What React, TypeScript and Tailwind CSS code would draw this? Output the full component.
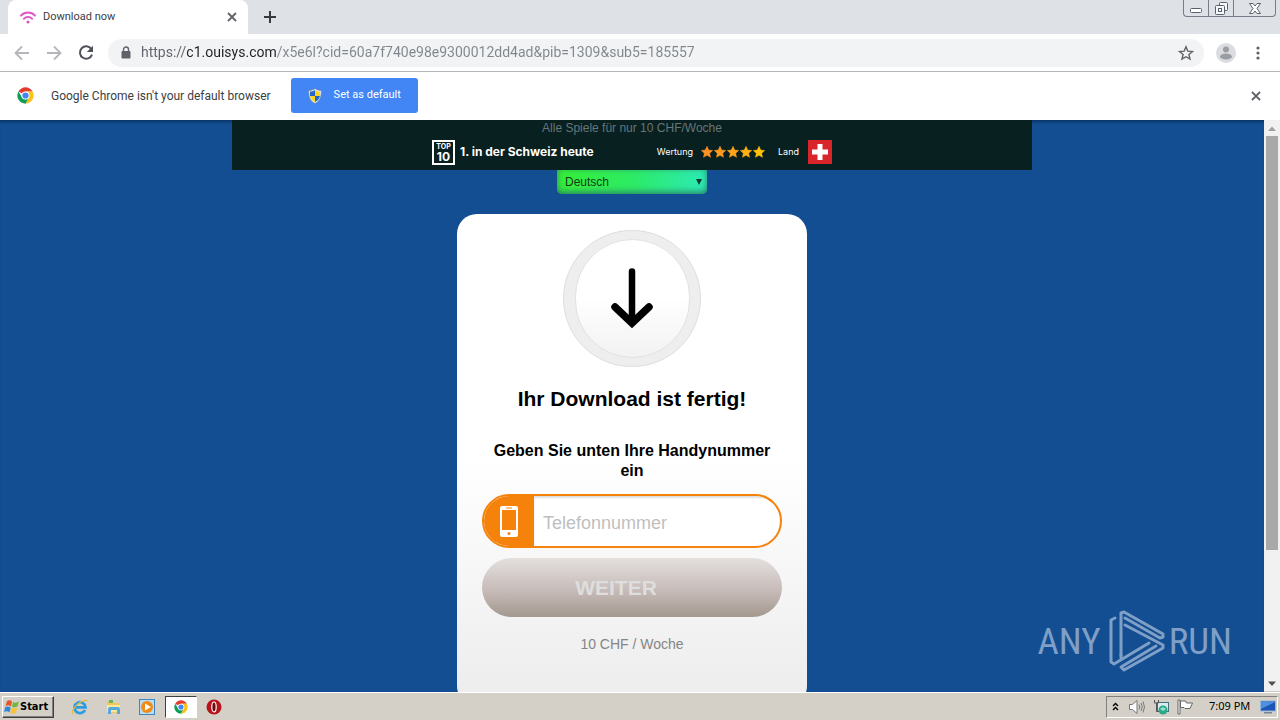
import React from 'react';

const ChromeLogo: React.FC<{ className: string }> = ({ className }) => (
  <svg viewBox="0 0 48 48" className={className} aria-hidden="true">
    <path d="M24 24 4.1 12.5A23 23 0 0 1 43.9 12.5L24 13Z" fill="#e33b2e" />
    <path d="M24 13H43.9A23 23 0 0 1 24 47L33.5 29.5Z" fill="#fbc116" />
    <path d="M4.1 12.5 14.5 29.5 24 35 33.5 29.5 24 47A23 23 0 0 1 4.1 12.5Z" fill="#109d58" />
    <circle cx="24" cy="24" r="11.5" fill="#fff" />
    <circle cx="24" cy="24" r="8.8" fill="#4285f4" />
  </svg>
);

const Shield = () => (
  <svg viewBox="0 0 16 16" className="h-4 w-4" aria-hidden="true">
    <path d="M8 .5C6 2 4 2.4 1.6 2.4 1.6 8 2.5 13 8 15.5 13.5 13 14.4 8 14.4 2.4 12 2.4 10 2 8 .5Z" fill="#e8eef5" stroke="#667f9d" strokeWidth=".7" />
    <path d="M8 2C6.5 3 5 3.5 3 3.6V8H8Z" fill="#2467c4" />
    <path d="M8 2C9.5 3 11 3.5 13 3.6V8H8Z" fill="#fbd51f" />
    <path d="M3 8H8V14C5 12.5 3.5 10.5 3 8Z" fill="#fbd51f" />
    <path d="M13 8H8V14C11 12.5 12.5 10.5 13 8Z" fill="#2467c4" />
  </svg>
);

const CrossIcon = () => (
  <svg viewBox="0 0 10 10" className="h-[10px] w-[10px]" aria-hidden="true">
    <path d="m1 1 8 8M9 1 1 9" stroke="#5f6368" strokeWidth="1.8" />
  </svg>
);

const TabStrip = () => (
  <header className="flex h-[34px] shrink-0 justify-between bg-[#dee1e6] pl-2">
    <div className="flex">
      <div className="flex w-60 items-center rounded-t-lg bg-white pl-3 pr-[11px]">
        <svg viewBox="0 0 16 13" className="mr-[7px] h-[13px] w-4" fill="none" stroke="#e056c8" strokeWidth="1.8" strokeLinecap="round" aria-hidden="true">
          <path d="M1 4.5C5 .5 11 .5 15 4.5M3.8 7.8C6 5.2 10 5.2 12.2 7.8" />
          <circle cx="8" cy="11" r="1.6" fill="#e056c8" stroke="none" />
        </svg>
        <span className="flex-1 text-[11px] text-[#3c4043]">Download now</span>
        <button aria-label="Close tab"><CrossIcon /></button>
      </div>
      <button aria-label="New tab" className="ml-4">
        <svg viewBox="0 0 12 12" className="h-3 w-3" aria-hidden="true">
          <path d="M6 0V12M0 6H12" stroke="#333a42" strokeWidth="2" />
        </svg>
      </button>
    </div>
    <div className="mr-1 flex h-[17px] w-[93px] rounded-b border border-t-0 border-[#777d88] text-[#596171]">
      <button aria-label="Minimize" className="flex w-[25px] items-end justify-center border-r border-[#777d88] pb-[3px]">
        <svg viewBox="0 0 12 5" className="h-[5px] w-3" aria-hidden="true"><rect x=".5" y=".5" width="11" height="4" rx="1" fill="#fff" stroke="currentColor" /></svg>
      </button>
      <button aria-label="Restore" className="flex w-[25px] items-center justify-center border-r border-[#777d88]">
        <svg viewBox="0 0 13 13" className="h-[13px] w-[13px]" fill="#f6f7f9" stroke="currentColor" aria-hidden="true">
          <rect x="4.5" y=".5" width="8" height="8" rx="1" />
          <rect x=".5" y="3.5" width="9" height="9" rx="1" />
          <rect x="3.5" y="6.5" width="3" height="3" />
        </svg>
      </button>
      <button aria-label="Close window" className="flex flex-1 items-center justify-center">
        <svg viewBox="0 0 12 11" className="h-[11px] w-3" aria-hidden="true">
          <path d="M.5.5H4L6 3 8 .5H11.5L8 5.5 11.5 10.5H8L6 8 4 10.5H.5L4 5.5Z" fill="#fff" stroke="currentColor" />
        </svg>
      </button>
    </div>
  </header>
);

const Toolbar = () => (
  <nav className="flex h-[38px] shrink-0 items-center border-b border-[#b3b5b8] bg-white pl-[14px] pr-5" aria-label="Navigation">
    <button aria-label="Back" className="mr-4">
      <svg viewBox="0 0 16 16" className="h-4 w-4" fill="none" stroke="#b4b6b9" strokeWidth="1.8" aria-hidden="true"><path d="M15 8H2M8 1.5 1.5 8 8 14.5" /></svg>
    </button>
    <button aria-label="Forward" className="mr-4">
      <svg viewBox="0 0 16 16" className="h-4 w-4" fill="none" stroke="#b4b6b9" strokeWidth="1.8" aria-hidden="true"><path d="M1 8H14M8 1.5 14.5 8 8 14.5" /></svg>
    </button>
    <button aria-label="Reload" className="mr-[14px]">
      <svg viewBox="0 0 16 16" className="h-4 w-4" aria-hidden="true">
        <path d="M13.3 4A6.2 6.2 0 1 0 14 9.6" fill="none" stroke="#4d5156" strokeWidth="2" />
        <path d="M15 .8V7H8.8Z" fill="#4d5156" />
      </svg>
    </button>
    <div className="flex h-7 flex-1 items-center rounded-full bg-[#f1f3f4] pl-[13px] pr-[10px]">
      <svg viewBox="0 0 10 13" className="mr-[10px] h-[13px] w-[10px]" aria-hidden="true">
        <rect x=".5" y="5" width="9" height="7.5" rx="1" fill="#5f6368" />
        <path d="M2.5 5.5V3.5a2.5 2.5 0 0 1 5 0V5.5" fill="none" stroke="#5f6368" strokeWidth="1.4" />
      </svg>
      <input
        aria-label="Address"
        defaultValue="https://c1.ouisys.com/x5e6l?cid=60a7f740e98e9300012dd4ad&pib=1309&sub5=185557"
        className="min-w-0 flex-1 bg-[linear-gradient(90deg,#5f6368_46px,#202124_46px,#202124_136px,#80868b_136px)] bg-clip-text pb-[2px] text-sm text-transparent outline-none"
      />
      <button aria-label="Bookmark">
        <svg viewBox="0 0 16 16" className="h-4 w-4" aria-hidden="true">
          <path d="m8 1.8 1.8 4.3 4.7.4-3.6 3 1.1 4.6L8 11.7l-4 2.4 1.1-4.6-3.6-3 4.7-.4Z" fill="none" stroke="#5f6368" strokeWidth="1.4" />
        </svg>
      </button>
    </div>
    <button aria-label="Profile" className="ml-3">
      <svg viewBox="0 0 20 20" className="h-5 w-5" aria-hidden="true">
        <circle cx="10" cy="10" r="10" fill="#dadce0" />
        <circle cx="10" cy="6.5" r="3" fill="#9a9da1" />
        <ellipse cx="10" cy="13.5" rx="6" ry="3" fill="#9a9da1" />
      </svg>
    </button>
    <button aria-label="Menu" className="ml-5">
      <svg viewBox="0 0 4 14" className="h-[14px] w-1" fill="#5f6368" aria-hidden="true">
        <circle cx="2" cy="2" r="1.6" /><circle cx="2" cy="7" r="1.6" /><circle cx="2" cy="12" r="1.6" />
      </svg>
    </button>
  </nav>
);

const InfoBar = () => (
  <div className="flex h-12 shrink-0 items-center bg-white pb-px pl-[17px] pr-[19px]">
    <ChromeLogo className="mr-[17px] h-[17px] w-[17px]" />
    <span className="text-xs text-[#3c4043]">Google Chrome isn't your default browser</span>
    <button className="ml-5 flex h-[35px] w-[127px] items-center rounded-[3px] bg-[#4285f4] pl-4 text-[11px] text-white">
      <Shield />
      <span className="ml-[11px]">Set as default</span>
    </button>
    <button aria-label="Dismiss" className="ml-auto"><CrossIcon /></button>
  </div>
);

const starColors = ['#ff9124', '#ff9a1f', '#ffa31a', '#ffb013', '#ffc107'];

const Banner = () => (
  <div className="h-[50px] w-full max-w-[800px] shrink-0 bg-[#08201f]">
    <p className="h-[18px] text-center text-xs leading-4 text-[#66767a]">Alle Spiele für nur 10 CHF/Woche</p>
    <div className="mx-auto flex h-7 w-[400px] items-center font-['Inter',sans-serif] text-white">
      <div className="flex h-[25px] w-[23px] flex-col items-center justify-center border-2 border-white pt-px font-bold">
        <span className="text-[7px] leading-[8px]">TOP</span>
        <span className="text-[12px] leading-[12px]">10</span>
      </div>
      <strong className="ml-[5px] flex-1 text-[12px] font-bold">1. in der Schweiz heute</strong>
      <span className="text-[9px]">Wertung</span>
      <div className="ml-2 flex gap-px" role="img" aria-label="5 / 5">
        {starColors.map((color) => (
          <svg key={color} viewBox="0 0 12 12" className="h-3 w-3" aria-hidden="true">
            <path d="m6 .3 1.7 3.7 4 .5-3 2.7.8 4.1L6 9.3l-3.5 2 .8-4.1-3-2.7 4-.5Z" fill={color} stroke={color} strokeWidth=".5" strokeLinejoin="round" />
          </svg>
        ))}
      </div>
      <span className="ml-[13px] text-[9px]">Land</span>
      <svg viewBox="0 0 24 24" className="ml-[9px] h-6 w-6" aria-hidden="true">
        <rect width="24" height="24" fill="#d9262b" />
        <path d="M9.5 4h5v5.5H20v5h-5.5V20h-5v-5.5H4v-5h5.5Z" fill="#fff" />
      </svg>
    </div>
  </div>
);

const DownloadCard = () => (
  <form className="mt-5 flex w-[350px] shrink-0 flex-col items-center rounded-[20px] bg-[linear-gradient(#fff_50%,#ececec)] px-[25px] pb-[50px] pt-4">
    <div className="flex h-[137px] w-[138px] items-center justify-center rounded-full border border-[#dedede] bg-[#eee]">
      <div className="flex h-[119px] w-[115px] items-center justify-center rounded-full border border-[#e2e2e2] bg-[linear-gradient(#fff_50%,#f2f2f2)]">
        <svg viewBox="0 0 42 62" className="h-[62px] w-[42px]" fill="none" stroke="#000" strokeLinecap="round" aria-hidden="true">
          <path d="M21 3.5V54" strokeWidth="6.5" />
          <path d="M4 39 21 55 38 39" strokeWidth="7.5" />
        </svg>
      </div>
    </div>
    <h1 className="mt-[18px] text-[21px] font-bold leading-7">Ihr Download ist fertig!</h1>
    <label htmlFor="phone" className="mt-7 text-center text-base font-bold leading-5">Geben Sie unten Ihre Handynummer ein</label>
    <div className="mt-[13px] flex h-[54px] w-full overflow-hidden rounded-full border-2 border-[#f5820a] bg-white">
      <span className="flex w-[50px] items-center justify-center bg-[#f5820a]">
        <svg viewBox="0 0 18 31" className="h-[31px] w-[18px]" aria-hidden="true">
          <rect width="18" height="31" rx="2" fill="#fff" />
          <rect x="2" y="4" width="14" height="20" fill="#f5820a" />
          <rect x="6" y="1.5" width="6" height="1" fill="#f5820a" />
          <circle cx="9" cy="27.5" r="1.5" fill="#f5820a" />
        </svg>
      </span>
      <input id="phone" type="tel" placeholder="Telefonnummer" className="min-w-0 flex-1 px-[9px] pt-1 text-lg shadow-[inset_0_2px_2px_#ddd] outline-none placeholder:text-[#bfbfbf]" />
    </div>
    <button type="button" className="mt-[10px] h-[59px] w-full rounded-full bg-[linear-gradient(#e4e0de,#c6bbb8_55%,#a4998f)] pr-8 text-[21px] font-bold text-[#dedede]">WEITER</button>
    <p className="mt-[15px] text-sm leading-6 text-[#858585]">10 CHF / Woche</p>
  </form>
);

const Watermark = () => (
  <div className="absolute bottom-5 right-8 flex items-center font-['Roboto_Condensed','Liberation_Sans_Narrow','Liberation_Sans',sans-serif] text-[37px] leading-none text-[#7f9fc7]">
    <span>ANY</span>
    <svg viewBox="0 0 56 62" className="ml-2 mr-1 h-[62px] w-14" fill="none" stroke="#7f9fc7" strokeWidth="3" strokeLinejoin="round" strokeLinecap="round" aria-hidden="true">
      <path d="M6 8 2 10V52L5 54 40 33" />
      <path d="M12 45V3L15 2 54 24V27L51 28 16 8" />
      <path d="M16 15 54 35V38L15 60 12 57 47 36" />
      <path d="M12 45V48" />
    </svg>
    <span>RUN</span>
  </div>
);

const Scrollbar = () => (
  <div className="flex w-4 shrink-0 flex-col items-center bg-[#f1f1f1]" aria-hidden="true">
    <svg viewBox="0 0 16 16" className="h-4 w-4"><path d="M4 11 8 6.5 12 11Z" fill="#a0a0a0" /></svg>
    <div className="h-[414px] w-3 bg-[#a8a8a8]" />
    <svg viewBox="0 0 16 16" className="mt-auto h-4 w-4"><path d="M4 5.5 8 10 12 5.5Z" fill="#505050" /></svg>
  </div>
);

const Taskbar = () => (
  <footer className="flex h-7 shrink-0 items-center justify-between border-t border-white bg-[#d4d0c8] pl-[2px] pr-[2px] outline outline-1 outline-[#c8cac8]">
    <div className="flex items-center">
      <button className="flex h-[22px] w-[52px] items-center border border-b-[#404040] border-l-white border-r-[#404040] border-t-white font-['DejaVu_Sans_Condensed','DejaVu_Sans',sans-serif] text-[11px] font-bold text-black shadow-[inset_-1px_-1px_#808080]">
        <svg viewBox="0 0 16 16" className="ml-[1px] h-4 w-4" aria-hidden="true">
          <path d="M3 2Q6 .5 8 2.5L7 7.5Q4.5 5.5 1.5 7Z" fill="#e8542a" />
          <path d="M9 3Q12 4.5 15 2.5L13.5 7.5Q11 9 8 7.7Z" fill="#72b63b" />
          <path d="M1.3 8Q4 6.8 6.7 8.5L5.5 13.5Q3 11.5 0 13Z" fill="#3487d7" />
          <path d="M7.8 9Q10.5 10 13.2 8.7L12 13.5Q9 15.5 6.6 14Z" fill="#f8c32d" />
        </svg>
        <span className="pt-[2px]">Start</span>
      </button>
      <div className="ml-[17px] flex items-center">
        <button aria-label="Internet Explorer">
          <svg viewBox="0 0 18 18" className="h-[18px] w-[18px]" fill="none" aria-hidden="true">
            <path d="M14 12A5.5 5.5 0 1 1 14.5 9.3H5" stroke="#2b9de0" strokeWidth="2.8" />
            <path d="M2 16C-1 12 11 0 17 3" stroke="#e8bd3c" strokeWidth="1.3" />
          </svg>
        </button>
        <button aria-label="Explorer" className="ml-4">
          <svg viewBox="0 0 18 18" className="h-[18px] w-[18px]" aria-hidden="true">
            <path d="M2 3H7L8 5H15V15H2Z" fill="#efc95a" />
            <path d="M4 2H8V5H4Z" fill="#67b65c" />
            <path d="M2 7H15V14H2Z" fill="#fbe69a" />
            <path d="M3 16V11Q3 9 5 9H13Q15 9 15 11V16H12V12H6V16Z" fill="#55a9dc" />
          </svg>
        </button>
        <button aria-label="Media Player" className="ml-4">
          <svg viewBox="0 0 16 16" className="h-4 w-4" aria-hidden="true">
            <rect x=".5" y=".5" width="15" height="15" fill="#b9dcf6" stroke="#3f87c2" />
            <circle cx="8" cy="8" r="6" fill="#f28a16" />
            <path d="M6 4.5V11.5L12 8Z" fill="#fff" />
          </svg>
        </button>
        <button aria-label="Chrome" className="ml-[10px] flex h-[22px] w-8 items-center justify-center border border-b-white border-l-[#404040] border-r-white border-t-[#404040] bg-white">
          <ChromeLogo className="h-[14px] w-[14px]" />
        </button>
        <button aria-label="Opera" className="ml-[9px]">
          <svg viewBox="0 0 16 16" className="h-4 w-4" aria-hidden="true">
            <circle cx="8" cy="8" r="7.5" fill="#b5141a" />
            <ellipse cx="8" cy="8" rx="2.2" ry="5" fill="#6e080b" stroke="#fff" strokeWidth="1.2" />
          </svg>
        </button>
      </div>
    </div>
    <div className="flex h-[22px] w-[172px] items-center border border-b-white border-l-[#808080] border-r-white border-t-[#808080] pl-[5px] font-['Noto_Sans',sans-serif] text-[11px] text-black">
      <button aria-label="Hidden icons">
        <svg viewBox="0 0 7 9" className="h-[9px] w-[7px]" fill="none" stroke="#000" strokeWidth="1.4" aria-hidden="true"><path d="m1 4 2.5-2.5L6 4M1 8l2.5-2.5L6 8" /></svg>
      </button>
      <svg viewBox="0 0 16 16" className="ml-[10px] h-4 w-4 shrink-0" fill="#fff" stroke="#777" role="img" aria-label="Volume">
        <path d="M.5 5.5H3.5L8 1.5V14.5L3.5 10.5H.5Z" />
        <path d="M10 5.5Q11.5 8 10 10.5M12 4Q14.5 8 12 12M14 2.5Q17 8 14 13.5" fill="none" />
      </svg>
      <svg viewBox="0 0 16 16" className="ml-2 h-4 w-4 shrink-0" role="img" aria-label="Network">
        <rect x="4.5" y="3.5" width="11" height="9" fill="#d7ecef" stroke="#466f79" />
        <path d="M1.5 1V4H5.5V1M3.5 4V12.5H8" fill="none" stroke="#555" />
        <circle cx="10" cy="11" r="4.5" fill="#29a989" /><path d="M7 10 10 8 13 10 10 12Z" fill="#a1dfcd" />
      </svg>
      <svg viewBox="0 0 17 16" className="ml-2 h-4 w-[17px] shrink-0" fill="#fff" stroke="#666" role="img" aria-label="Action center">
        <path d="M1 1H3V15H1ZM3.5 2H8.5L9.5 4H15.5L13 9.5H8L7 8.5H3.5Z" />
      </svg>
      <time className="ml-[15px] whitespace-nowrap">7:09 PM</time>
      <button aria-label="Show desktop" className="ml-auto mr-[1px]">
        <svg viewBox="0 0 16 14" className="h-[14px] w-4" aria-hidden="true">
          <rect x=".5" y="1" width="15" height="10" fill="#1c55b5" stroke="#95b7dd" /><path d="M1 2H15L1 9Z" fill="#4b91df" /><rect x="4" y="12" width="8" height="1.5" fill="#738496" />
        </svg>
      </button>
    </div>
  </footer>
);

export default function App() {
  return (
    <div className="flex h-screen flex-col overflow-hidden font-['Roboto',sans-serif]">
      <TabStrip />
      <Toolbar />
      <InfoBar />
      <div className="flex min-h-0 flex-1">
        <main className="relative flex min-w-0 flex-1 flex-col items-center overflow-hidden bg-[#124e91] font-['Liberation_Sans',Arial,sans-serif] text-black shadow-[inset_0_4px_3px_-2px_#0b3566]">
          <Banner />
          <div className="relative h-6 w-[150px] shrink-0">
            <select aria-label="Sprache" className="block h-6 w-full appearance-none rounded-b-[5px] bg-[linear-gradient(100deg,#35ef35,#2deb65_50%,#2ceabb)] pl-2 text-xs text-[#123b18] shadow-[inset_0_-2px_6px_#287e65]">
              <option>Deutsch</option>
            </select>
            <svg viewBox="0 0 6 6" className="pointer-events-none absolute right-[5px] top-[9px] h-[6px] w-[6px]" aria-hidden="true"><path d="M0 0H6L3 6Z" fill="#12392c" /></svg>
          </div>
          <DownloadCard />
          <Watermark />
        </main>
        <Scrollbar />
      </div>
      <Taskbar />
    </div>
  );
}
